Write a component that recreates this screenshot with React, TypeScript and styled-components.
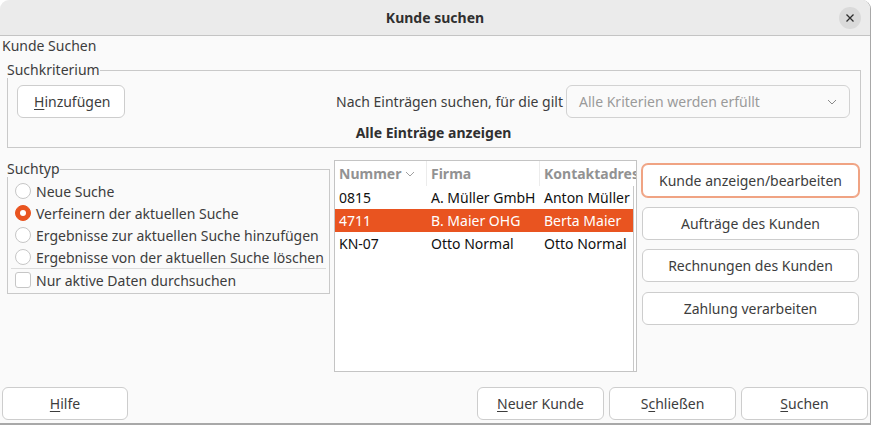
import { createGlobalStyle, styled } from "styled-components";

const GlobalStyle = createGlobalStyle`
    html, body {
        margin: 0;
        padding: 0;
        background: #ffffff;
    }
    body {
        font-family: "Noto Sans", "DejaVu Sans", sans-serif;
        font-size: 14px;
        color: #3d3d3d;
    }
    * {
        box-sizing: border-box;
    }
`;

const Window = styled.div`
    width: 871px;
    height: 425px;
    display: flex;
    flex-direction: column;
    background: #fafafa;
    border-radius: 9px 9px 0 0;
    border-right: 1px solid #a8a8a8;
    border-bottom: 2px solid #a8a8a8;
    overflow: hidden;
`;

const TitleBar = styled.div`
    height: 36px;
    flex: none;
    display: grid;
    grid-template-columns: 1fr auto 1fr;
    align-items: center;
    background: #ebebeb;
    border-bottom: 1px solid #c4c4c4;
`;

const Title = styled.div`
    grid-column: 2;
    font-weight: 700;
    font-size: 14px;
    color: #303030;
`;

const CloseButton = styled.div`
    grid-column: 3;
    justify-self: end;
    margin-right: 9px;
    width: 22px;
    height: 22px;
    border-radius: 50%;
    background: #dadada;
    display: flex;
    align-items: center;
    justify-content: center;
`;

const Body = styled.div`
    flex: 1;
    display: flex;
    flex-direction: column;
`;

const Heading = styled.div`
    height: 20px;
    line-height: 20px;
    padding-left: 2px;
`;

const Frame = styled.fieldset`
    margin: 0;
    padding: 0;
    border: 1px solid #c9c9c9;
    min-width: 0;
`;

const Legend = styled.legend`
    padding: 0;
    margin-left: -1px;
    height: 16px;
    line-height: 16px;
    font-size: 14px;
`;

const CriteriaFrame = styled(Frame)`
    margin: 6px 9px 0 7px;
`;

const CriteriaContent = styled.div`
    padding: 7px 10px 6px 9px;
`;

const CriteriaRow = styled.div`
    display: flex;
    align-items: center;
    height: 33px;
`;

const Spacer = styled.div`
    flex: 1;
`;

const RuleLabel = styled.span`
    margin-right: 3px;
`;

const Button = styled.button<{ $width?: number; $focused?: boolean }>`
    height: 33px;
    width: ${({ $width }) => ($width ? `${$width}px` : "auto")};
    padding: 0 16px;
    font-family: inherit;
    font-size: 14px;
    color: #3d3d3d;
    background: #ffffff;
    border: 1px solid #cdcdcd;
    border-radius: 6px;
    box-shadow: ${({ $focused }) => ($focused ? "0 0 0 1px #f0a383" : "none")};
    border-color: ${({ $focused }) => ($focused ? "#f0a383" : "#cdcdcd")};
    cursor: default;
`;

const Mnemonic = styled.span`
    text-decoration: underline;
    text-underline-offset: 2px;
`;

const Select = styled.div`
    width: 284px;
    height: 33px;
    display: flex;
    align-items: center;
    justify-content: space-between;
    padding: 0 12px;
    border: 1px solid #d2d2d2;
    border-radius: 6px;
    color: #9a9a9a;
    background: #fafafa;
`;

const ShowAll = styled.div`
    margin-top: 7px;
    text-align: center;
    font-weight: 700;
    color: #303030;
    height: 16px;
    line-height: 16px;
`;

const Lower = styled.div`
    display: flex;
    align-items: flex-start;
    margin-top: 12px;
    height: 212px;
`;

const TypeFrame = styled(Frame)`
    margin: 1px 0 0 7px;
    width: 323px;
`;

const TypeContent = styled.div`
    padding: 3px 2px 2px 7px;
`;

const OptionRow = styled.div`
    height: 22px;
    display: flex;
    align-items: center;
    gap: 5px;
    white-space: nowrap;
`;

const Radio = styled.span<{ $checked?: boolean }>`
    width: 16px;
    height: 16px;
    flex: none;
    border-radius: 50%;
    border: 1px solid ${({ $checked }) => ($checked ? "#e95420" : "#c6c6c6")};
    background: ${({ $checked }) => ($checked ? "#e95420" : "#ffffff")};
    display: flex;
    align-items: center;
    justify-content: center;
    &::after {
        content: "";
        width: 6px;
        height: 6px;
        border-radius: 50%;
        background: ${({ $checked }) => ($checked ? "#ffffff" : "transparent")};
    }
`;

const Checkbox = styled.span`
    width: 16px;
    height: 16px;
    flex: none;
    border-radius: 3px;
    border: 1px solid #c6c6c6;
    background: #ffffff;
`;

const Separator = styled.div`
    height: 1px;
    margin: 0 1px 0 -4px;
    background: #dcdcdc;
`;

const Table = styled.div`
    margin-left: 4px;
    width: 303px;
    height: 212px;
    border: 1px solid #c4c4c4;
    background: #ffffff;
    display: flex;
    flex-direction: column;
    overflow: hidden;
`;

const Columns = "92px 113px 1fr";

const HeaderRow = styled.div`
    display: grid;
    grid-template-columns: ${Columns};
    height: 25px;
    flex: none;
    white-space: nowrap;
    overflow: hidden;
`;

const HeaderCell = styled.div`
    display: flex;
    align-items: center;
    gap: 4px;
    padding-left: 4px;
    font-weight: 700;
    color: #929292;
    border-right: 1px solid #ececec;
    overflow: hidden;
    &:last-child {
        border-right: none;
    }
`;

const RowsArea = styled.div`
    flex: 1;
    margin-right: 2px;
    border-right: 1px solid #c8c8c8;
`;

const DataRow = styled.div<{ $selected?: boolean }>`
    display: grid;
    grid-template-columns: ${Columns};
    height: 23px;
    align-items: center;
    white-space: nowrap;
    color: ${({ $selected }) => ($selected ? "#ffffff" : "#101010")};
    background: ${({ $selected }) => ($selected ? "#e95420" : "transparent")};
`;

const Cell = styled.div`
    padding-left: 4px;
    overflow: hidden;
`;

const ActionColumn = styled.div`
    margin-left: 5px;
    margin-top: 4px;
    width: 217px;
    display: flex;
    flex-direction: column;
    gap: 9.5px;
`;

const Footer = styled.div`
    margin-top: 15px;
    display: flex;
    align-items: center;
    padding: 0 2px 0 2px;
`;

const FooterGroup = styled.div`
    display: flex;
    gap: 5px;
`;

const Chevron = ({ color, size }: { color: string; size: number }) => (
    <svg width={size} height={size * 0.6} viewBox="0 0 10 6" fill="none">
        <path d="M1 1l4 4 4-4" stroke={color} strokeWidth="1" />
    </svg>
);

const options = [
    { label: "Neue Suche", checked: false },
    { label: "Verfeinern der aktuellen Suche", checked: true },
    { label: "Ergebnisse zur aktuellen Suche hinzufügen", checked: false },
    { label: "Ergebnisse von der aktuellen Suche löschen", checked: false },
];

const customers = [
    { nr: "0815", firma: "A. Müller GmbH", kontakt: "Anton Müller" },
    { nr: "4711", firma: "B. Maier OHG", kontakt: "Berta Maier" },
    { nr: "KN-07", firma: "Otto Normal", kontakt: "Otto Normal" },
];

export default function App() {
    return (
        <>
            <GlobalStyle />
            <Window>
                <TitleBar>
                    <Title>Kunde suchen</Title>
                    <CloseButton>
                        <svg width="8" height="8" viewBox="0 0 8 8">
                            <path d="M0.5 0.5l7 7M7.5 0.5l-7 7" stroke="#2e2e2e" strokeWidth="1.3" />
                        </svg>
                    </CloseButton>
                </TitleBar>
                <Body>
                    <Heading>Kunde Suchen</Heading>
                    <CriteriaFrame>
                        <Legend>Suchkriterium</Legend>
                        <CriteriaContent>
                            <CriteriaRow>
                                <Button $width={108}>
                                    <Mnemonic>H</Mnemonic>inzufügen
                                </Button>
                                <Spacer />
                                <RuleLabel>Nach Einträgen suchen, für die gilt</RuleLabel>
                                <Select>
                                    <span>Alle Kriterien werden erfüllt</span>
                                    <Chevron color="#8a8a8a" size={10} />
                                </Select>
                            </CriteriaRow>
                            <ShowAll>Alle Einträge anzeigen</ShowAll>
                        </CriteriaContent>
                    </CriteriaFrame>
                    <Lower>
                        <TypeFrame>
                            <Legend>Suchtyp</Legend>
                            <TypeContent>
                                {options.map((o) => (
                                    <OptionRow key={o.label}>
                                        <Radio $checked={o.checked} />
                                        {o.label}
                                    </OptionRow>
                                ))}
                                <Separator />
                                <OptionRow>
                                    <Checkbox />
                                    Nur aktive Daten durchsuchen
                                </OptionRow>
                            </TypeContent>
                        </TypeFrame>
                        <Table>
                            <HeaderRow>
                                <HeaderCell>
                                    Nummer
                                    <Chevron color="#a0a0a0" size={10} />
                                </HeaderCell>
                                <HeaderCell>Firma</HeaderCell>
                                <HeaderCell>Kontaktadresse</HeaderCell>
                            </HeaderRow>
                            <RowsArea>
                                {customers.map((c) => (
                                    <DataRow key={c.nr} $selected={c.nr === "4711"}>
                                        <Cell>{c.nr}</Cell>
                                        <Cell>{c.firma}</Cell>
                                        <Cell>{c.kontakt}</Cell>
                                    </DataRow>
                                ))}
                            </RowsArea>
                        </Table>
                        <ActionColumn>
                            <Button $focused>Kunde anzeigen/bearbeiten</Button>
                            <Button>Aufträge des Kunden</Button>
                            <Button>Rechnungen des Kunden</Button>
                            <Button>Zahlung verarbeiten</Button>
                        </ActionColumn>
                    </Lower>
                    <Footer>
                        <Button $width={126}>
                            <Mnemonic>H</Mnemonic>ilfe
                        </Button>
                        <Spacer />
                        <FooterGroup>
                            <Button $width={127}>
                                <Mnemonic>N</Mnemonic>euer Kunde
                            </Button>
                            <Button $width={127}>
                                S<Mnemonic>c</Mnemonic>hließen
                            </Button>
                            <Button $width={127}>
                                <Mnemonic>S</Mnemonic>uchen
                            </Button>
                        </FooterGroup>
                    </Footer>
                </Body>
            </Window>
        </>
    );
}
